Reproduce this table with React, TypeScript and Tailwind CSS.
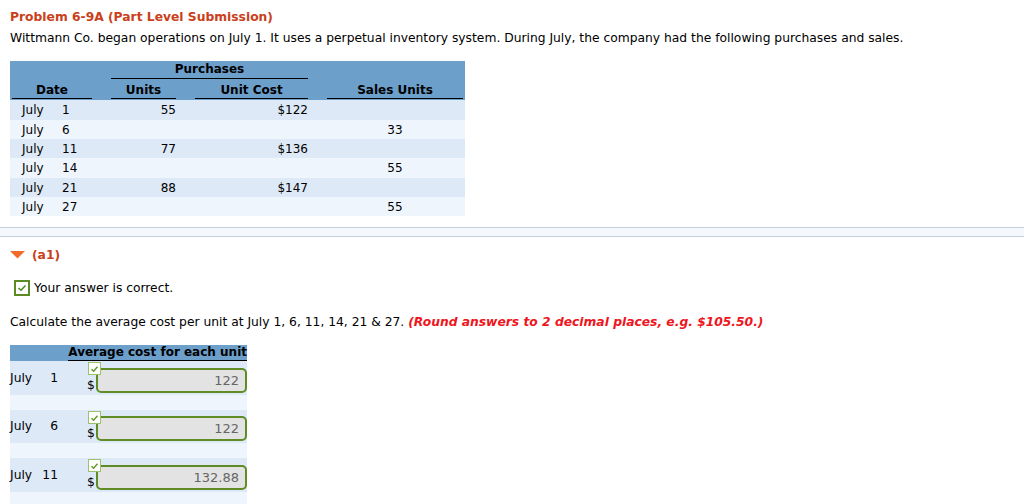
import React from "react";

const rows = [
  { day: "1", units: "55", cost: "$122", sales: "", h: "h-[20px]", bg: "bg-[#dde9f6]" },
  { day: "6", units: "", cost: "", sales: "33", h: "h-[19px]", bg: "bg-[#eef5fd]" },
  { day: "11", units: "77", cost: "$136", sales: "", h: "h-[19px]", bg: "bg-[#dde9f6]" },
  { day: "14", units: "", cost: "", sales: "55", h: "h-[20px]", bg: "bg-[#eef5fd]" },
  { day: "21", units: "88", cost: "$147", sales: "", h: "h-[19px]", bg: "bg-[#dde9f6]" },
  { day: "27", units: "", cost: "", sales: "55", h: "h-[19px]", bg: "bg-[#eef5fd]" },
];

const answers = [
  { day: "1", value: "122" },
  { day: "6", value: "122" },
  { day: "11", value: "132.88" },
];

function SmallCheck() {
  return (
    <span className="absolute left-[1px] top-[1px] flex h-[13px] w-[13px] items-center justify-center border border-[#9bc46a] bg-white">
      <svg width="9" height="8" viewBox="0 0 9 8">
        <path d="M1.5 4.2 L3.6 6.2 L7.5 1.8" fill="none" stroke="#5f9a22" strokeWidth="1.4" />
      </svg>
    </span>
  );
}

export default function App() {
  return (
    <div
      className="h-[504px] w-[1024px] overflow-hidden bg-white text-[12.3px] text-black"
      style={{ fontFamily: '"DejaVu Sans", Verdana, sans-serif' }}
    >
      <div className="px-[10px]">
        <div className="mt-[9px] h-[16px] font-bold leading-[16px] text-[#c9401b]">
          Problem 6-9A (Part Level Submission)
        </div>
        <div className="mt-[5px] h-[16px] leading-[16px]">
          Wittmann Co. began operations on July 1. It uses a perpetual inventory system. During July, the company had the
          following purchases and sales.
        </div>

        {/* purchases / sales table */}
        <div className="mt-[15px] w-[455px] text-[12px]">
          <div className="bg-[#6d9fcb] px-[2px] font-bold">
            <div className="grid h-[18px] grid-cols-[80px_65px_113px_136px] gap-x-[19px]">
              <div />
              <div className="col-span-2 border-b border-black text-center leading-[17px]">Purchases</div>
            </div>
            <div className="grid h-[21px] grid-cols-[80px_65px_113px_136px] gap-x-[19px] pt-[3px]">
              <div className="h-[17px] border-b border-black text-center leading-[16px]">Date</div>
              <div className="h-[17px] border-b border-black text-center leading-[16px]">Units</div>
              <div className="h-[17px] border-b border-black text-center leading-[16px]">Unit Cost</div>
              <div className="h-[17px] border-b border-black text-center leading-[16px]">Sales Units</div>
            </div>
          </div>
          {rows.map((r) => (
            <div
              key={r.day}
              className={`grid ${r.h} ${r.bg} grid-cols-[80px_65px_113px_136px] items-center gap-x-[19px] px-[2px]`}
            >
              <div className="flex pl-[10px]">
                <span className="w-[40px]">July</span>
                <span>{r.day}</span>
              </div>
              <div className="text-right">{r.units}</div>
              <div className="text-right">{r.cost}</div>
              <div className="text-center">{r.sales}</div>
            </div>
          ))}
        </div>
      </div>

      <div className="mt-[11px] h-[10px] border-y border-[#c6cedb] bg-[#f4f8fc]" />

      <div className="px-[10px]">
        <div className="mt-[10px] flex h-[16px] items-center gap-[7px] font-bold text-[#c9401b]">
          <svg width="15" height="8" viewBox="0 0 15 8">
            <path d="M0 0 H15 L7.5 7.5 Z" fill="#f26b2c" />
          </svg>
          <span>(a1)</span>
        </div>

        <div className="mt-[17px] flex h-[16px] items-center gap-[4px] pl-[4px]">
          <span className="flex h-[16px] w-[16px] items-center justify-center border-2 border-[#5b8c23] bg-white">
            <svg width="10" height="8" viewBox="0 0 10 8">
              <path d="M1.5 4 L4 6.3 L8.5 1.5" fill="none" stroke="#4e8a1c" strokeWidth="1.5" />
            </svg>
          </span>
          <span>Your answer is correct.</span>
        </div>

        <div className="mt-[18px] h-[16px] leading-[16px]">
          Calculate the average cost per unit at July 1, 6, 11, 14, 21 &amp; 27.{" "}
          <span className="font-bold italic text-[#ee1520]">(Round answers to 2 decimal places, e.g. $105.50.)</span>
        </div>

        {/* average cost table */}
        <div className="mt-[15px] w-[237px]">
          <div className="flex h-[16px] justify-end bg-[#6d9fcb]">
            <span className="h-[16px] border-b border-black text-[12px] font-bold leading-[15px]">
              Average cost for each unit
            </span>
          </div>
          {answers.map((a, i) => (
            <div key={a.day}>
              <div className={`flex ${i === 1 ? "h-[33px]" : "h-[34px]"} bg-[#dde9f6]`}>
                <div className="flex w-[48px] items-center justify-between">
                  <span>July</span>
                  <span>{a.day}</span>
                </div>
                <div className="relative ml-[29px] flex flex-1 items-end pb-[2px]">
                  <SmallCheck />
                  <span className="w-[9px] leading-[15px]">$</span>
                  <div className="flex h-[25px] flex-1 items-center justify-end rounded-[5px] border-2 border-[#5f8c25] bg-[#e3e3e3] pr-[6px] text-[13px] text-[#666]">
                    {a.value}
                  </div>
                </div>
              </div>
              <div className="h-[15px] bg-[#eef5fd]" />
            </div>
          ))}
        </div>
      </div>
    </div>
  );
}
